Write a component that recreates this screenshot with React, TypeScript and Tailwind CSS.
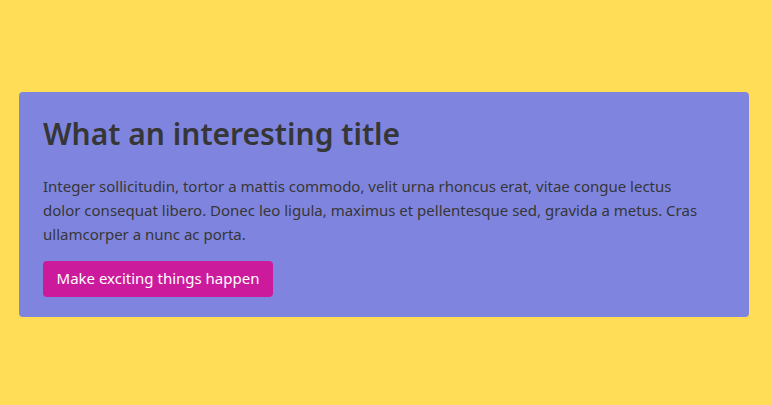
export default function App() {
  return (
    <div className="min-h-[405px] w-full bg-[#ffdd57] flex items-center pl-[19px] pr-[23px] pt-[3px]" style={{ fontFamily: '"Noto Sans", sans-serif' }}>
      <div className="w-full bg-[#7f85df] rounded-[4px] px-6 pt-[24px] pb-[20px]">
        <h1 className="text-[30px] leading-[1.2] font-semibold text-[#363636]">What an interesting title</h1>
        <p className="mt-[22px] max-w-[655px] text-[15px] leading-[24px] text-[#363636]">
          Integer sollicitudin, tortor a mattis commodo, velit urna rhoncus erat, vitae congue lectus dolor consequat libero. Donec leo ligula, maximus et pellentesque sed, gravida a metus. Cras ullamcorper a nunc ac porta.
        </p>
        <button className="mt-[15px] h-[36px] w-[230px] rounded-[4px] bg-[#cc1a9c] text-white text-[15px]">Make exciting things happen</button>
      </div>
    </div>
  );
}
